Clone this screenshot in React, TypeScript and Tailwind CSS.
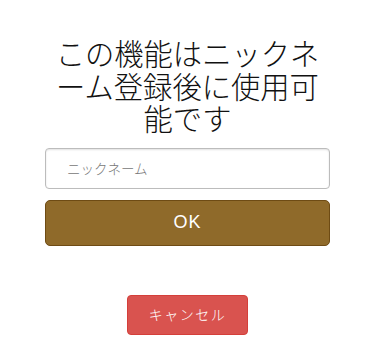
export default function App() {
  return (
    <div className="w-[375px] h-[362px] bg-white font-['Noto_Sans_CJK_JP','Noto_Sans',sans-serif] flex flex-col items-center">
      <h1 className="mt-[36px] w-[285px] text-center text-[29.3px] leading-[32.5px] font-light text-[#111]">
        この機能はニックネーム登録後に使用可能です
      </h1>
      <div className="mt-[14px] w-[285px] flex flex-col gap-[11px]">
        <input
          type="text"
          placeholder="ニックネーム"
          className="h-[41px] w-full rounded-[4px] border border-[#bcbcbc] bg-white px-[21px] text-[13.5px] text-[#333] placeholder:text-[#777] shadow-[inset_0_1px_2px_rgba(0,0,0,0.12)] outline-none font-light"
        />
        <button className="h-[46px] w-full rounded-[5px] border border-[#6e4b14] bg-[#8f6a2a] text-white text-[18px] tracking-[1px] font-['Liberation_Sans',sans-serif]">
          OK
        </button>
      </div>
      <button className="mt-[49px] h-[40px] w-[121px] rounded-[4px] border border-[#d43f3a] bg-[#d9534f] text-white text-[14px] tracking-[1.5px] font-light">
        キャンセル
      </button>
    </div>
  );
}
